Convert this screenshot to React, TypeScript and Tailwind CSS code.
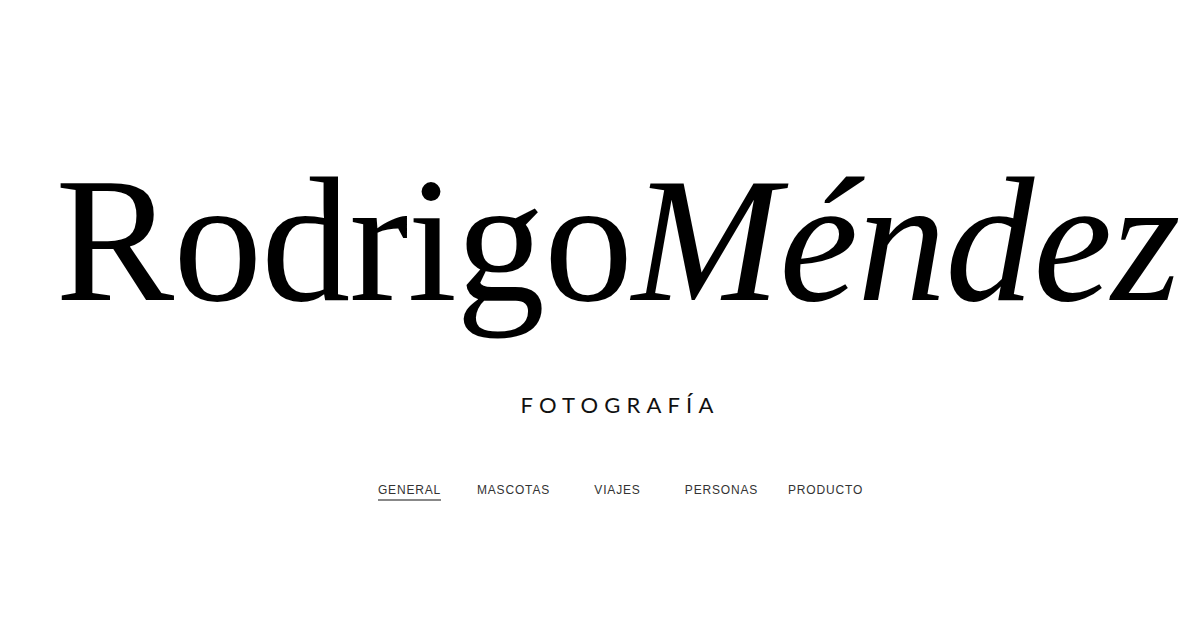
const links = ['GENERAL', 'MASCOTAS', 'VIAJES', 'PERSONAS', 'PRODUCTO'];

export default function App() {
  return (
    <div className="w-[1200px] h-[630px] bg-white flex flex-col items-center pl-[35px] pt-[151px]">
      {/* Title */}
      <h1 className="font-['Liberation_Serif',serif] text-[178px] leading-none text-black whitespace-nowrap tracking-[-1px]">
        Rodrigo<span className="italic">Méndez</span>
      </h1>

      {/* Subtitle */}
      <p className="mt-[65px] pl-[5px] font-['Lato',sans-serif] text-[22px] leading-none tracking-[0.28em] text-[#111]">
        FOTOGRAFÍA
      </p>

      {/* Nav */}
      <nav className="mt-[68px] flex">
        {links.map((l, i) => (
          <div key={l} className="w-[104px] flex justify-center">
            <span
              className={
                'font-["Liberation_Sans",sans-serif] text-[12px] leading-none tracking-[0.07em] text-[#333] pb-[3px] ' +
                (i === 0 ? 'border-b-2 border-[#888]' : 'border-b-2 border-transparent')
              }
            >
              {l}
            </span>
          </div>
        ))}
      </nav>
    </div>
  );
}
